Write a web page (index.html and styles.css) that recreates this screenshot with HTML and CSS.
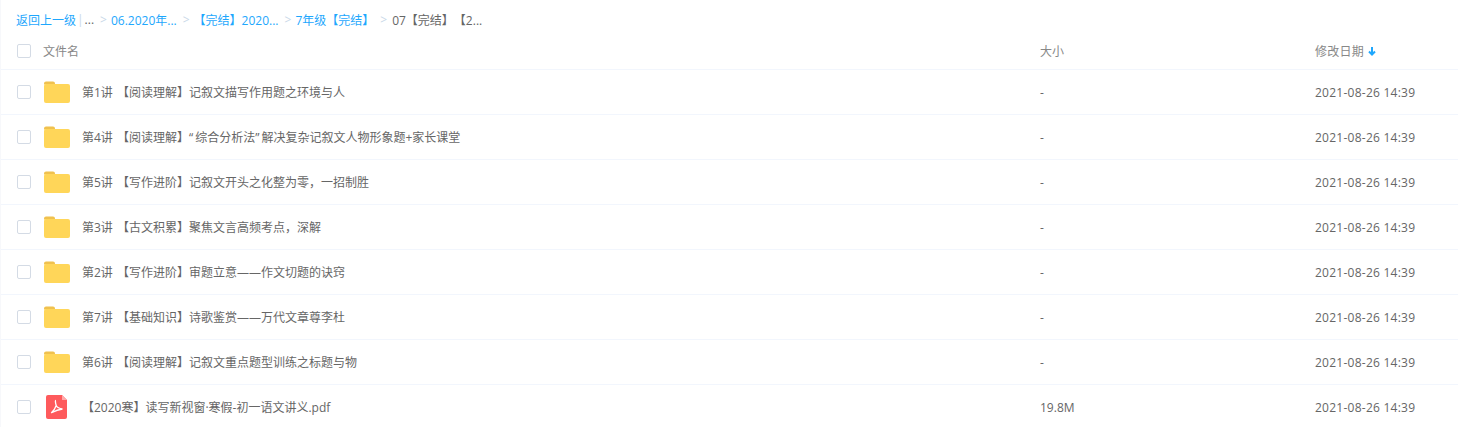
FILE: index.html
```html
<!DOCTYPE html>
<html lang="zh-CN">
<head>
    <meta charset="UTF-8">
    <title>文件列表</title>
    <link rel="stylesheet" href="styles.css">
</head>
<body>
    <svg class="icon-defs" width="0" height="0">
        <symbol id="folder" viewBox="0 0 26 22">
            <path d="M0 2.500a2 2 0 0 1 2-2h7a2 2 0 0 1 2 2v1H0z" fill="#f0c14f"/>
            <path d="M0 5a2 2 0 0 1 2-2h22a2 2 0 0 1 2 2v15a2 2 0 0 1-2 2H2a2 2 0 0 1-2-2z" fill="#ffd659"/>
        </symbol>
    </svg>

    <div class="crumbs">
        <a href="#">返回上一级</a>
        <span class="bar">|</span>
        <span class="crumb-text">...</span>
        <span class="sep">&gt;</span>
        <a href="#">06.2020年...</a>
        <span class="sep">&gt;</span>
        <a href="#">【完结】2020...</a>
        <span class="sep">&gt;</span>
        <a href="#">7年级【完结】</a>
        <span class="sep sep-last">&gt;</span>
        <span class="crumb-text crumb-last">07【完结】【2...</span>
    </div>

    <div class="row head">
        <span class="check"></span>
        <span class="name">文件名</span>
        <span class="size">大小</span>
        <span class="date">修改日期
            <svg class="sort" width="8" height="9" viewBox="0 0 8 9"><path d="M4 0v7.500M1 4.500l3 3 3-3" fill="none" stroke="#1ea7fd" stroke-width="2"/></svg>
        </span>
    </div>

    <div class="row">
        <span class="check"></span>
        <svg class="folder" width="26" height="22"><use href="#folder"/></svg>
        <span class="name">第1讲 【阅读理解】记叙文描写作用题之环境与人</span>
        <span class="size">-</span>
        <span class="date">2021-08-26 14:39</span>
    </div>
    <div class="row">
        <span class="check"></span>
        <svg class="folder" width="26" height="22"><use href="#folder"/></svg>
        <span class="name">第4讲 【阅读理解】<span class="quote">“</span>综合分析法<span class="quote">”</span>解决复杂记叙文人物形象题+家长课堂</span>
        <span class="size">-</span>
        <span class="date">2021-08-26 14:39</span>
    </div>
    <div class="row">
        <span class="check"></span>
        <svg class="folder" width="26" height="22"><use href="#folder"/></svg>
        <span class="name">第5讲 【写作进阶】记叙文开头之化整为零，一招制胜</span>
        <span class="size">-</span>
        <span class="date">2021-08-26 14:39</span>
    </div>
    <div class="row">
        <span class="check"></span>
        <svg class="folder" width="26" height="22"><use href="#folder"/></svg>
        <span class="name">第3讲 【古文积累】聚焦文言高频考点，深解</span>
        <span class="size">-</span>
        <span class="date">2021-08-26 14:39</span>
    </div>
    <div class="row">
        <span class="check"></span>
        <svg class="folder" width="26" height="22"><use href="#folder"/></svg>
        <span class="name">第2讲 【写作进阶】审题立意——作文切题的诀窍</span>
        <span class="size">-</span>
        <span class="date">2021-08-26 14:39</span>
    </div>
    <div class="row">
        <span class="check"></span>
        <svg class="folder" width="26" height="22"><use href="#folder"/></svg>
        <span class="name">第7讲 【基础知识】诗歌鉴赏——万代文章尊李杜</span>
        <span class="size">-</span>
        <span class="date">2021-08-26 14:39</span>
    </div>
    <div class="row">
        <span class="check"></span>
        <svg class="folder" width="26" height="22"><use href="#folder"/></svg>
        <span class="name">第6讲 【阅读理解】记叙文重点题型训练之标题与物</span>
        <span class="size">-</span>
        <span class="date">2021-08-26 14:39</span>
    </div>
    <div class="row">
        <span class="check"></span>
        <svg class="pdf" width="21" height="24" viewBox="0 0 21 24">
            <path d="M2 0h14l5 5v17a2 2 0 0 1-2 2H2a2 2 0 0 1-2-2V2a2 2 0 0 1 2-2z" fill="#fe5a5c"/>
            <path d="M16 0l5 5h-5z" fill="#ffa9aa"/>
            <path d="M10 5.500c-.8 0-.8 1.500.2 5-1 3-2.400 5.300-5 7.500M10.200 10.500c1 2 2.500 3 6.300 3.500M5.200 18c2-1 5-3 11.300-4" fill="none" stroke="#fff" stroke-width="1.300"/>
        </svg>
        <span class="name name-pdf">【2020寒】读写新视窗·寒假-初一语文讲义.pdf</span>
        <span class="size">19.8M</span>
        <span class="date">2021-08-26 14:39</span>
    </div>
</body>
</html>
```

FILE: styles.css
```css
body {
    margin: 0;
    height: 427px;
    overflow: hidden;
    background-color: #fff;
    border-left: 1px solid #f7f8fb;
    font-family: "Open Sans", "Noto Sans CJK SC", sans-serif;
    font-size: 12px;
    color: #666;
}

.icon-defs {
    display: none;
}

.crumbs {
    display: flex;
    align-items: center;
    height: 27px;
    padding: 6px 0 0 15px;
    white-space: nowrap;
}

.crumbs a {
    color: #1ea7fd;
    text-decoration: none;
}

.crumbs .bar {
    margin: 0 1px;
    color: #c9d8e8;
}

.crumbs .sep {
    margin: 0 4px 0 6px;
    color: #c9d8e8;
}

.crumbs .sep-last {
    margin-left: 6px;
    margin-right: 5px;
}

.crumb-text {
    color: #666;
}

.crumb-last {
    text-spacing-trim: space-all;
}

.row {
    display: flex;
    align-items: center;
    height: 44px;
    padding-left: 16px;
    border-bottom: 1px solid #f2f6fd;
}

.head {
    height: 36px;
    color: #888;
}

.check {
    flex: none;
    width: 12px;
    height: 12px;
    border: 1px solid #d4dbe5;
    border-radius: 2px;
}

.folder {
    flex: none;
    margin-left: 13px;
}

.pdf {
    flex: none;
    margin-left: 15px;
}

.name {
    flex: 1;
    margin-left: 12px;
    white-space: nowrap;
    word-spacing: 1px;
}

.name-pdf {
    margin-left: 15px;
}

.quote {
    letter-spacing: 2px;
}

.size {
    flex: none;
    width: 275px;
}

.date {
    flex: none;
    width: 143px;
    white-space: nowrap;
    letter-spacing: 0.25px;
}

.sort {
    margin-left: 1px;
}
```
